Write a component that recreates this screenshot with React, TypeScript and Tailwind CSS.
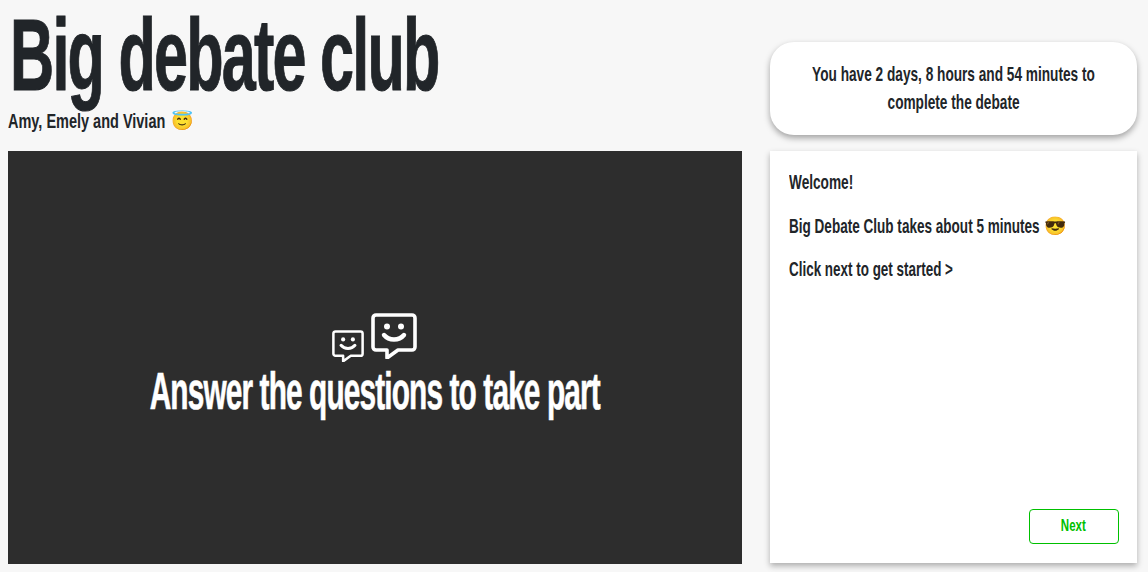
import React from 'react';

const font = { fontFamily: '"Liberation Sans", Arial, sans-serif' };

const ChatIcon = ({ className }: { className: string }) => (
  <svg className={className} viewBox="0 0 46 46" fill="none" stroke="white" strokeWidth="3.6" strokeLinejoin="round" strokeLinecap="round">
    <path d="M5 2h36a3 3 0 0 1 3 3v29a3 3 0 0 1-3 3H27l-11 8v-8H5a3 3 0 0 1-3-3V5a3 3 0 0 1 3-3z" />
    <circle cx="16" cy="13.5" r="3" fill="white" stroke="none" />
    <circle cx="30" cy="13.5" r="3" fill="white" stroke="none" />
    <path d="M13 22c5 6 15 6 20 0" strokeWidth="4.4" />
  </svg>
);

export default function App() {
  return (
    <div className="h-[572px] w-[1148px] overflow-hidden bg-[#f7f7f7] font-bold text-[#212529]" style={font}>
      <div className="flex gap-[28px] pl-2 pr-[11px]">
        <div className="flex w-[734px] flex-col">
          <h1 className="ml-[2px] h-[100px] pt-[5px] text-[102px] leading-[100px] font-bold tracking-[-3px] whitespace-nowrap [-webkit-text-stroke:1px_#212529]">
            <span className="inline-block origin-left scale-x-[0.6]">Big debate club</span>
          </h1>
          <div className="flex h-[51px] items-start pt-[7px] text-[21px] leading-[28px]">
            <span className="w-[158px] shrink-0 origin-left scale-x-[0.69] whitespace-nowrap">Amy, Emely and Vivian</span>
            <span className="ml-[5px] text-[18px] font-normal">😇</span>
          </div>
          <div className="flex h-[413px] flex-col items-center bg-[#2d2d2d] pt-[162px] text-white">
            <div className="flex items-end gap-[7px] pr-[1px]">
              <ChatIcon className="mb-[-3px] h-[32px] w-[32px]" />
              <ChatIcon className="h-[46px] w-[46px]" />
            </div>
            <div className="mt-[6px] text-[51px] leading-[54px] tracking-[-1.5px] whitespace-nowrap [-webkit-text-stroke:0.6px_white]">
              <span className="inline-block scale-x-[0.585]">Answer the questions to take part</span>
            </div>
          </div>
        </div>
        <div className="flex w-[367px] flex-col pt-[42px]">
          <div className="flex h-[93px] flex-col items-center justify-center rounded-[24px] bg-white pb-[2px] text-[21px] leading-[28px] whitespace-nowrap shadow-[0_3px_6px_rgba(0,0,0,0.35)]">
            <span className="scale-x-[0.65]">You have 2 days, 8 hours and 54 minutes to</span>
            <span className="scale-x-[0.65]">complete the debate</span>
          </div>
          <div className="mt-[16px] flex h-[412px] flex-col bg-white px-[19px] pt-[17px] pb-[19px] text-[21px] shadow-[0_3px_6px_rgba(0,0,0,0.3)]">
            <p className="origin-left scale-x-[0.65] leading-[28px]">Welcome!</p>
            <div className="mt-[16px] flex items-center leading-[28px]">
              <span className="w-[251px] shrink-0 origin-left scale-x-[0.645] whitespace-nowrap">Big Debate Club takes about 5 minutes</span>
              <span className="ml-[4px] text-[18px] font-normal">😎</span>
            </div>
            <p className="mt-[15px] origin-left scale-x-[0.64] leading-[28px] whitespace-nowrap">Click next to get started &gt;</p>
            <button className="mt-auto mr-[-1px] ml-auto h-[35px] w-[90px] rounded-[4px] border border-[#00c000] pr-[1px] pb-[2px] text-[16px] text-[#00c000]">
              <span className="inline-block scale-x-[0.72]">Next</span>
            </button>
          </div>
        </div>
      </div>
    </div>
  );
}
